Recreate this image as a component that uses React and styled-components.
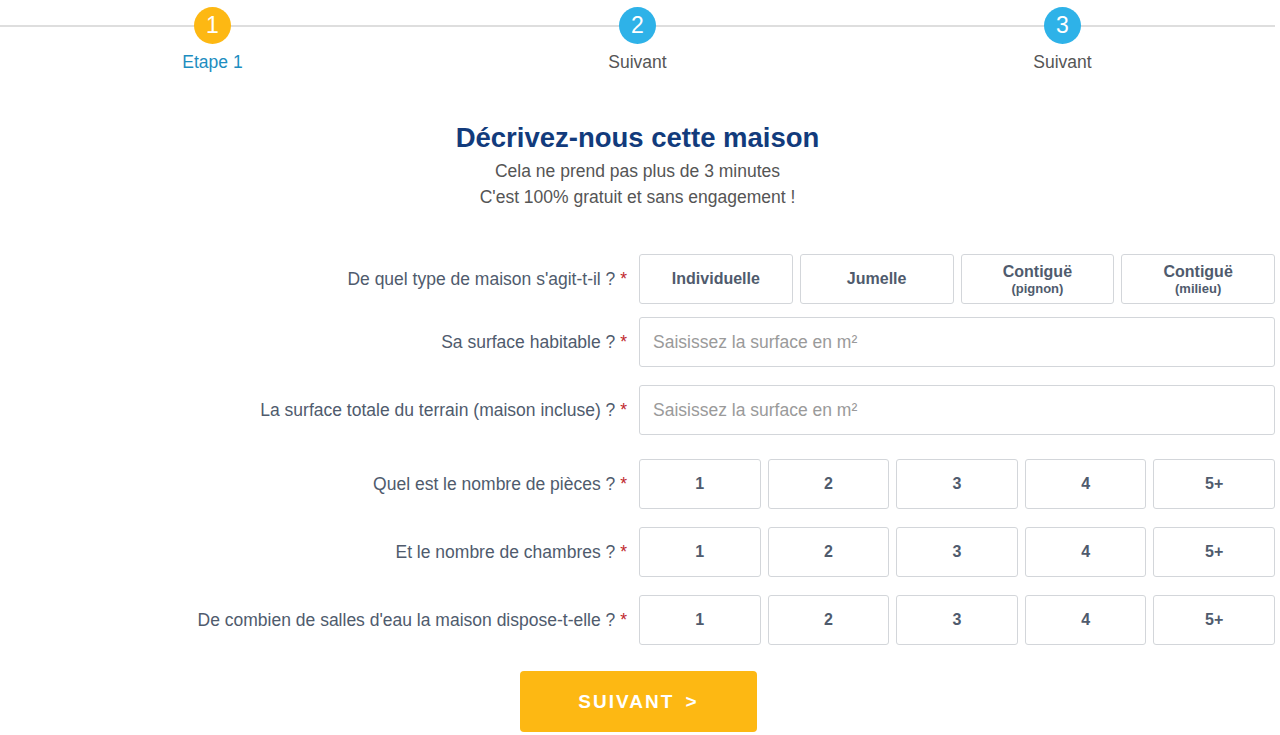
import React from 'react';
import styled, { createGlobalStyle } from 'styled-components';

const yellow = '#fdb813';
const blue = '#2eb2e8';
const navy = '#123b7c';
const slate = '#4f5b6d';
const border = '#d3d6da';

const GlobalStyle = createGlobalStyle`
    body {
        margin: 0;
        background: #fff;
        font-family: "Liberation Sans", Arial, sans-serif;
    }
`;

const Page = styled.div`
    width: 1275px;
`;

const Steps = styled.ol`
    position: relative;
    display: grid;
    grid-template-columns: repeat(3, 1fr);
    margin: 0;
    padding: 7px 0 0;
    list-style: none;

    &::before {
        content: '';
        position: absolute;
        top: 25px;
        left: 0;
        right: 0;
        height: 2px;
        background: #dedede;
    }
`;

const Step = styled.li`
    position: relative;
    display: flex;
    flex-direction: column;
    align-items: center;

    .dot {
        width: 37px;
        height: 37px;
        border-radius: 50%;
        display: flex;
        align-items: center;
        justify-content: center;
        font-size: 23px;
        color: #fff;
        background: ${({ $active }) => ($active ? yellow : blue)};
    }

    .label {
        margin-top: 8px;
        font-size: 17.5px;
        line-height: 20px;
        color: ${({ $active }) => ($active ? '#1d8dc0' : '#555')};
    }
`;

const Intro = styled.header`
    margin-top: 49px;
    text-align: center;

    h1 {
        margin: 0 0 3px;
        font-size: 27.5px;
        line-height: 34px;
        font-weight: bold;
        color: ${navy};
    }

    p {
        margin: 0;
        font-size: 17.5px;
        line-height: 26px;
        color: #555;
    }
`;

const Form = styled.form`
    margin-top: 44px;
    display: grid;
    grid-template-columns: 1fr 636px;
    column-gap: 12px;
    align-items: center;
`;

const Label = styled.label`
    margin-top: ${({ $gap }) => $gap}px;
    text-align: right;
    font-size: 17.5px;
    color: ${slate};

    span {
        color: #c0272d;
    }
`;

const Options = styled.div`
    margin-top: ${({ $gap }) => $gap}px;
    display: grid;
    grid-template-columns: repeat(${({ $count }) => $count}, 1fr);
    column-gap: 7px;
`;

const Option = styled.button`
    height: 50px;
    display: flex;
    flex-direction: column;
    align-items: center;
    justify-content: center;
    padding: 0;
    border: 1px solid ${border};
    border-radius: 3px;
    background: #fff;
    font-family: inherit;
    font-size: 16px;
    font-weight: bold;
    line-height: 18px;
    color: ${slate};
    cursor: pointer;

    small {
        font-size: 13px;
        line-height: 15px;
    }
`;

const Input = styled.input`
    margin-top: ${({ $gap }) => $gap}px;
    box-sizing: border-box;
    width: 100%;
    height: 50px;
    padding: 0 13px;
    border: 1px solid ${border};
    border-radius: 3px;
    font-family: inherit;
    font-size: 17.5px;
    color: ${slate};

    &::placeholder {
        color: #9a9a9a;
    }
`;

const Submit = styled.button`
    display: block;
    width: 237px;
    height: 61px;
    margin: 26px 0 0 520px;
    border: none;
    border-radius: 4px;
    background: ${yellow};
    color: #fff;
    font-family: inherit;
    font-size: 19px;
    font-weight: bold;
    letter-spacing: 2px;
    word-spacing: 4px;
    cursor: pointer;
`;

const counts = ['1', '2', '3', '4', '5+'];

const countQuestions = [
    { label: 'Quel est le nombre de pièces ?', gap: 24 },
    { label: 'Et le nombre de chambres ?', gap: 18 },
    { label: "De combien de salles d'eau la maison dispose-t-elle ?", gap: 18 },
];

const App = () => {
    return (
        <Page>
            <GlobalStyle />
            <Steps>
                <Step $active>
                    <div className="dot">1</div>
                    <div className="label">Etape 1</div>
                </Step>
                <Step>
                    <div className="dot">2</div>
                    <div className="label">Suivant</div>
                </Step>
                <Step>
                    <div className="dot">3</div>
                    <div className="label">Suivant</div>
                </Step>
            </Steps>

            <Intro>
                <h1>Décrivez-nous cette maison</h1>
                <p>Cela ne prend pas plus de 3 minutes</p>
                <p>C'est 100% gratuit et sans engagement !</p>
            </Intro>

            <Form onSubmit={(e) => e.preventDefault()}>
                <Label $gap={0}>De quel type de maison s'agit-t-il ? <span>*</span></Label>
                <Options $count={4} $gap={0}>
                    <Option type="button">Individuelle</Option>
                    <Option type="button">Jumelle</Option>
                    <Option type="button">Contiguë<small>(pignon)</small></Option>
                    <Option type="button">Contiguë<small>(milieu)</small></Option>
                </Options>

                <Label $gap={13}>Sa surface habitable ? <span>*</span></Label>
                <Input $gap={13} placeholder="Saisissez la surface en m²" />

                <Label $gap={18}>La surface totale du terrain (maison incluse) ? <span>*</span></Label>
                <Input $gap={18} placeholder="Saisissez la surface en m²" />

                {countQuestions.map((q) => (
                    <React.Fragment key={q.label}>
                        <Label $gap={q.gap}>{q.label} <span>*</span></Label>
                        <Options $count={5} $gap={q.gap}>
                            {counts.map((c) => (
                                <Option type="button" key={c}>{c}</Option>
                            ))}
                        </Options>
                    </React.Fragment>
                ))}
            </Form>

            <Submit type="submit">SUIVANT &gt;</Submit>
        </Page>
    );
};

export default App;
